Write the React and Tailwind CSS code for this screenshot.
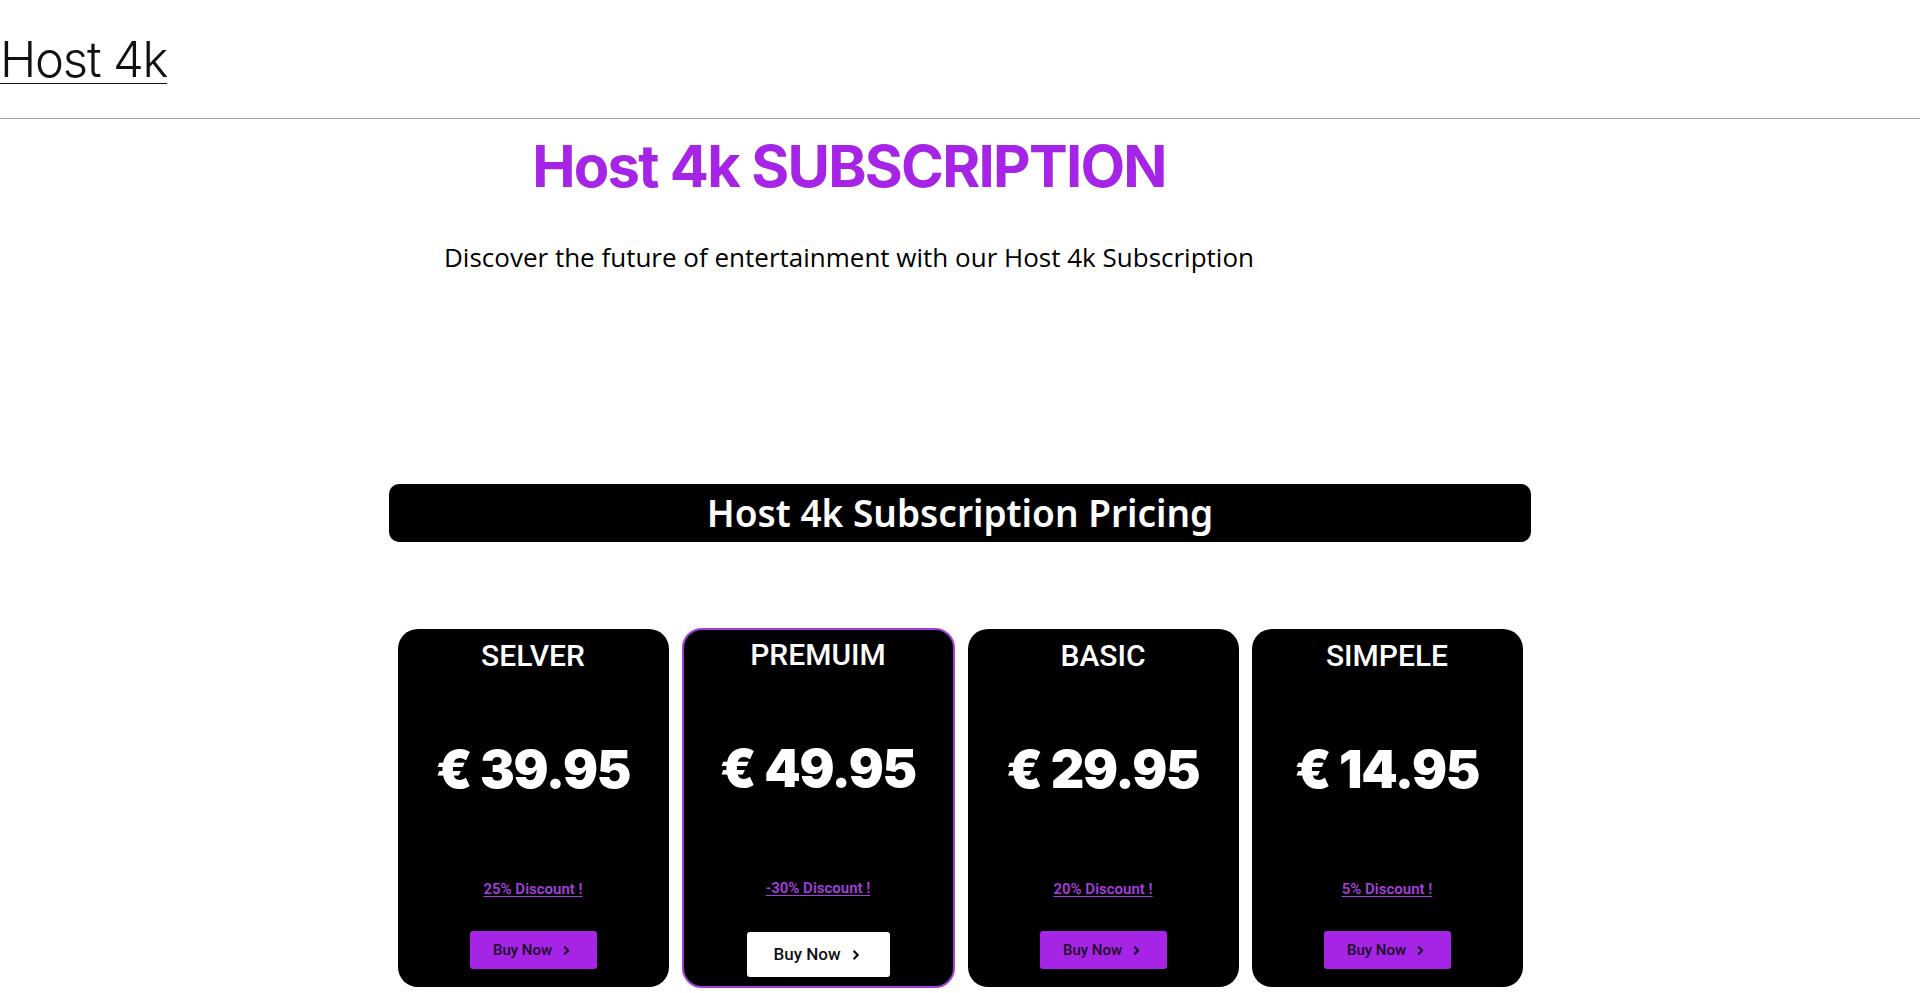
import { ChevronRight } from 'lucide-react'

const PLANS = [
  { name: 'SELVER', price: '€ 39.95', discount: '25% Discount !' },
  { name: 'PREMUIM', price: '€ 49.95', discount: '-30% Discount !', featured: true },
  { name: 'BASIC', price: '€ 29.95', discount: '20% Discount !' },
  { name: 'SIMPELE', price: '€ 14.95', discount: '5% Discount !' },
]

function PlanCard({ plan }) {
  return (
    <div
      className={
        plan.featured
          ? 'w-[273px] h-[360px] -my-px bg-black rounded-[20px] border-2 border-[#a43fdc] flex flex-col items-center pt-[8px]'
          : 'w-[271px] h-[358px] bg-black rounded-[20px] flex flex-col items-center pt-[10px]'
      }
    >
      {/* plan name */}
      <div className="text-white text-[30px] leading-[34px] font-medium font-['Roboto',sans-serif]">
        {plan.name}
      </div>

      {/* price */}
      <div className="mt-[70px] text-white text-[52px] leading-[54px] font-black font-['Inter',sans-serif] tracking-tight">
        {plan.price}
      </div>

      {/* discount */}
      <a
        href="#"
        className="mt-[82px] text-[#a43fdc] text-[15px] leading-[20px] font-semibold underline underline-offset-2 font-['Roboto',sans-serif]"
      >
        {plan.discount}
      </a>

      {/* buy button */}
      {plan.featured ? (
        <button className="mt-[34px] w-[143px] h-[45px] bg-white rounded-[3px] flex items-center justify-center gap-[8px] text-[#111] text-[17px] font-medium font-['Roboto',sans-serif]">
          Buy Now
          <ChevronRight size={14} strokeWidth={4} />
        </button>
      ) : (
        <button className="mt-[32px] w-[127px] h-[38px] bg-[#a524e6] rounded-[3px] flex items-center justify-center gap-[8px] text-[#1a0a24] text-[15px] font-medium font-['Roboto',sans-serif]">
          Buy Now
          <ChevronRight size={13} strokeWidth={4} />
        </button>
      )}
    </div>
  )
}

export default function App() {
  return (
    <div className="min-h-screen bg-white">
      {/* ── Header ─────────────────────────────────────────────── */}
      <header className="h-[119px] flex items-center border-b border-[#a0a0a0]">
        <a
          href="#"
          className="text-[49px] leading-none font-light text-[#111] underline decoration-1 underline-offset-[6px] font-['Inter',sans-serif] tracking-tight"
        >
          Host 4k
        </a>
      </header>

      {/* ── Hero ───────────────────────────────────────────────── */}
      <section className="w-[1698px] text-center">
        <h1 className="mt-[12px] text-[58px] leading-[70px] font-bold tracking-[-0.03em] text-[#a524e6] font-['Inter',sans-serif]">
          Host 4k SUBSCRIPTION
        </h1>
        <p className="mt-[40px] text-[26px] leading-[32px] text-black font-['Open_Sans',sans-serif]">
          Discover the future of entertainment with our Host 4k Subscription
        </p>
      </section>

      {/* ── Pricing ────────────────────────────────────────────── */}
      <section className="mt-[211px] flex flex-col items-center pb-4">
        <div className="w-[1142px] h-[58px] bg-black rounded-[10px] flex items-center justify-center">
          <h2 className="text-white text-[37px] font-semibold font-['Noto_Sans',sans-serif]">
            Host 4k Subscription Pricing
          </h2>
        </div>

        <div className="mt-[87px] flex items-start gap-[13px]">
          {PLANS.map(plan => (
            <PlanCard key={plan.name} plan={plan} />
          ))}
        </div>
      </section>
    </div>
  )
}
